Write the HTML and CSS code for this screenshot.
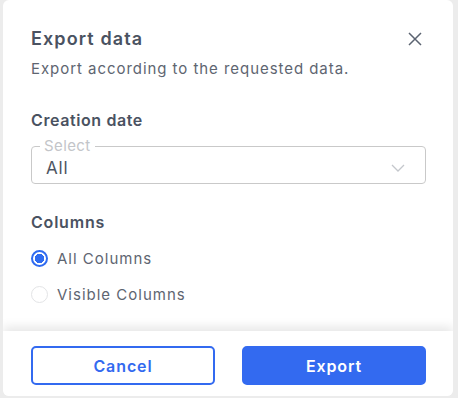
FILE: index.html
```html
<!DOCTYPE html>
<html>
<head>
<meta charset="utf-8">
<link rel="stylesheet" href="styles.css">
</head>
<body>
<div class="dialog">
  <div class="content">
    <div class="header">
      <h1 class="title">Export data</h1>
      <button class="close" aria-label="Close">
        <svg width="14" height="14" viewBox="0 0 14 14"><path d="M1 1L13 13M13 1L1 13" stroke="#5b6371" stroke-width="1.5" fill="none"/></svg>
      </button>
    </div>
    <p class="subtitle">Export according to the requested data.</p>

    <h2 class="section">Creation date</h2>
    <fieldset class="select">
      <legend class="legend">Select</legend>
      <span class="value">All</span>
      <svg class="chev" width="14" height="8" viewBox="0 0 14 8"><path d="M1 1L7 7L13 1" stroke="#c4c7cc" stroke-width="1.3" fill="none"/></svg>
    </fieldset>

    <h2 class="section cols">Columns</h2>
    <label class="radio first"><span class="dot checked"></span>All Columns</label>
    <label class="radio"><span class="dot"></span>Visible Columns</label>
  </div>
  <div class="footer">
    <button class="btn outline">Cancel</button>
    <button class="btn primary">Export</button>
  </div>
</div>
</body>
</html>
```
FILE: styles.css
```css
html, body { margin: 0; padding: 0; }
body {
  background: #ececec;
  font-family: "Inter", "Noto Sans", sans-serif;
  width: 458px;
  height: 398px;
  overflow: hidden;
}
.dialog {
  margin-left: 3px;
  width: 450px;
  height: 396px;
  background: #fff;
  border-radius: 6px;
  display: flex;
  flex-direction: column;
  overflow: hidden;
}
.content {
  flex: 1;
  padding: 26px 27px 0 28px;
}
.header {
  display: flex;
  justify-content: space-between;
  align-items: center;
}
.title {
  margin: 0;
  font-size: 18px;
  font-weight: 600;
  letter-spacing: 1.1px;
  color: #4a5261;
  line-height: 26px;
}
.close {
  border: 0;
  background: none;
  padding: 0;
  margin-right: 4px;
  width: 14px;
  height: 14px;
  display: flex;
}
.subtitle {
  margin: 6px 0 0 0;
  font-size: 15px;
  letter-spacing: 0.95px;
  color: #5e6571;
  line-height: 22px;
}
.section {
  margin: 29px 0 0 0;
  font-size: 16px;
  font-weight: 600;
  letter-spacing: 0.6px;
  color: #4a5261;
  line-height: 22px;
}
.select {
  margin: 7px 0 0 0;
  padding: 0 20px 2px 14px;
  border: 1.5px solid #c9c9c9;
  border-radius: 4px;
  height: 46px;
  box-sizing: border-box;
  display: flex;
  align-items: center;
  justify-content: space-between;
  min-width: 0;
}
.legend {
  padding: 0 4px;
  margin-left: -6px;
  font-size: 15px;
  letter-spacing: 0.4px;
  color: #c3c5c9;
  line-height: 16px;
}
.value {
  font-size: 17px;
  letter-spacing: 0.8px;
  color: #4f5663;
}
.cols { margin-top: 27px; }
.cols { letter-spacing: 0.8px; }
.radio {
  display: flex;
  align-items: center;
  gap: 9px;
  font-size: 15px;
  letter-spacing: 1px;
  color: #5e6571;
  height: 36px;
}
.radio.first { margin-top: 7px; }
.dot {
  width: 17px;
  height: 17px;
  border-radius: 50%;
  border: 1.5px solid #e3e4e6;
  box-sizing: border-box;
  display: inline-block;
}
.dot.checked {
  border: 2px solid #2f6bf0;
  background: radial-gradient(circle, #2f6bf0 0 4.5px, #fff 5px);
}
.footer {
  height: 65px;
  box-sizing: border-box;
  padding: 15px 27px 11px 28px;
  display: flex;
  gap: 27px;
  background: #fff;
  box-shadow: 0 -4px 10px rgba(0,0,0,0.10);
}
.btn {
  flex: 1;
  border-radius: 5px;
  font-family: inherit;
  font-size: 16px;
  font-weight: 600;
  letter-spacing: 0.9px;
  cursor: pointer;
}
.outline {
  background: #fff;
  border: 2px solid #336af0;
  color: #336af0;
}
.primary {
  background: #336af0;
  border: 2px solid #336af0;
  color: #fff;
}
```
